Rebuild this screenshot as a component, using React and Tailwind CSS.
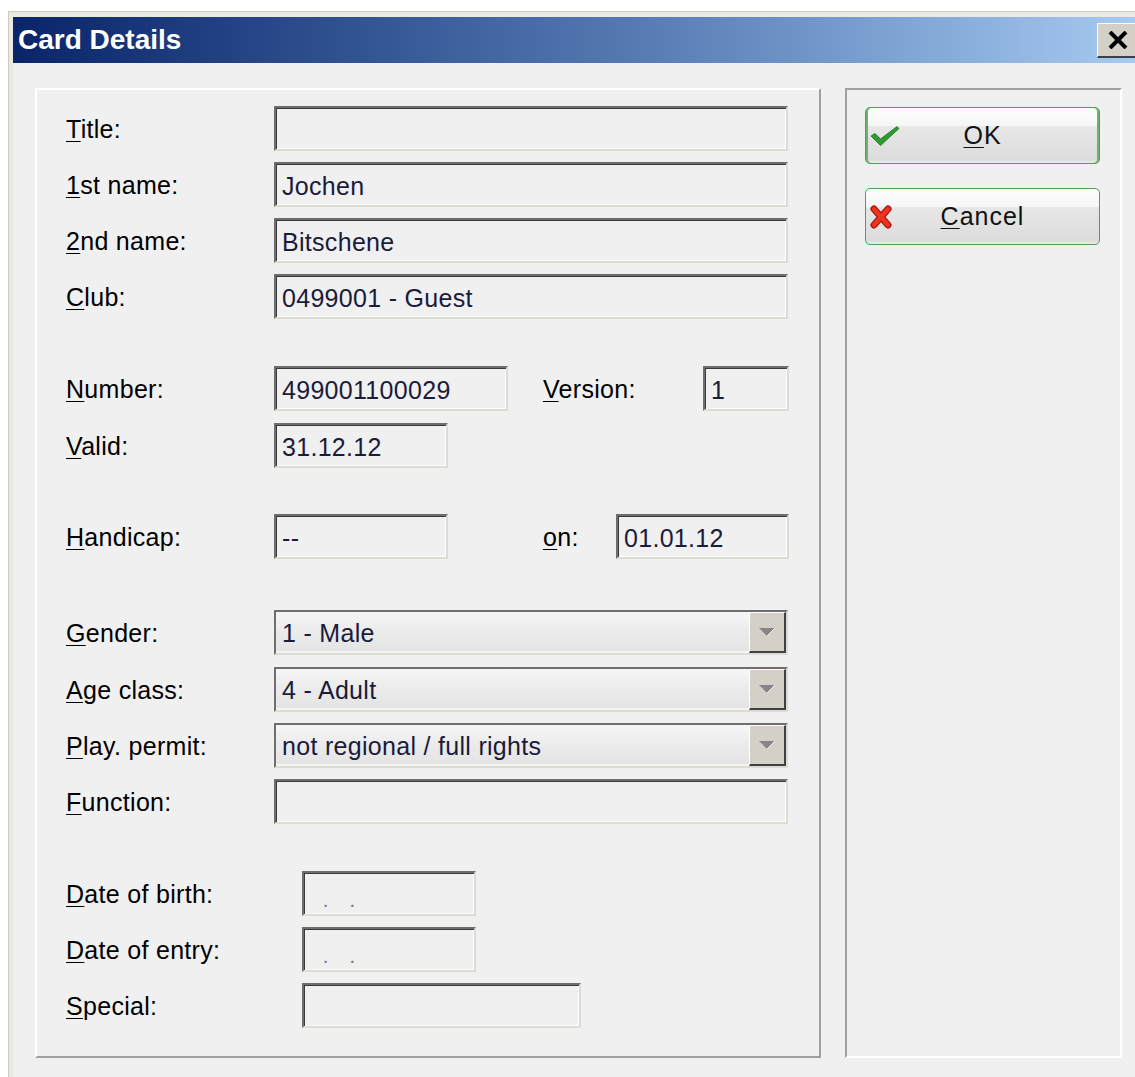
import React from "react";

const FONT = "font-['Liberation_Sans',Arial,sans-serif]";

// Label with an underlined access key as its first character
function Mn({ k, rest }) {
  return (
    <span className="text-[25px] tracking-[0.3px] text-black leading-none">
      <span className="underline decoration-1 underline-offset-[3px]">{k}</span>
      {rest}
    </span>
  );
}

// Sunken edit box
function Field({ w, children }) {
  return (
    <div
      className={`${w} h-[45px] shrink-0 border-2 border-t-[#6e6e6e] border-l-[#6e6e6e] border-b-[#dedbd4] border-r-[#dedbd4] shadow-[inset_1px_1px_0_#3a3a3a,inset_-1px_-1px_0_#ffffff] bg-[#f0f0f0] flex items-center pl-[6px] pt-[4px] text-[25px] tracking-[0.3px] text-[#1b1b3a] whitespace-pre overflow-hidden leading-none`}
    >
      {children}
    </div>
  );
}

// Drop-down list box
function Combo({ value }) {
  return (
    <div className="w-[514px] h-[45px] shrink-0 border-2 border-t-[#6e6e6e] border-l-[#6e6e6e] border-b-[#dedbd4] border-r-[#dedbd4] shadow-[inset_1px_1px_0_#3a3a3a] flex items-stretch">
      <div className="flex-1 flex items-center pl-[6px] pt-[4px] bg-[linear-gradient(to_bottom,#f6f6f6_0%,#ececec_45%,#e4e4e4_100%)] text-[25px] tracking-[0.3px] text-[#1b1b3a] whitespace-pre leading-none border-b-2 border-b-[#f4f4f4]">
        {value}
      </div>
      <div className="w-[37px] bg-[#d4d0c8] border-t border-l border-t-white border-l-white border-b-2 border-r-2 border-b-[#404040] border-r-[#404040] flex items-center justify-center">
        <svg width="18" height="10" viewBox="0 0 18 10">
          <path d="M1 1 H17 L9 9 Z" fill="#868686" />
          <path d="M17 1 L9 9" stroke="#ffffff" strokeWidth="1" opacity="0.8" />
        </svg>
      </div>
    </div>
  );
}

function Row({ mt, labelW, k, rest, children }) {
  return (
    <div className={`flex items-center h-[45px] ${mt}`}>
      <div className={`${labelW} shrink-0 pt-[4px]`}>
        <Mn k={k} rest={rest} />
      </div>
      {children}
    </div>
  );
}

function CheckIcon() {
  return (
    <svg width="30" height="22" viewBox="0 0 30 22">
      <path
        d="M1 11 L5 8.5 L10.5 14 L27 1.5 L29 3.5 L10.5 20.5 Z"
        fill="#2f9a2f"
        stroke="#1c6e1c"
        strokeWidth="0.8"
        strokeLinejoin="round"
      />
    </svg>
  );
}

function CrossIcon() {
  return (
    <svg width="22" height="24" viewBox="0 0 22 24">
      <g strokeLinecap="round">
        <path d="M4 4 L18 20 M18 4 L4 20" stroke="#a81a10" strokeWidth="7" />
        <path d="M4 4 L18 20 M18 4 L4 20" stroke="#f0331e" strokeWidth="4.2" />
      </g>
    </svg>
  );
}

function DlgButton({ icon, k, rest, isDefault, mt }) {
  return (
    <div
      className={`${mt} w-[235px] h-[57px] rounded-[5px] border-[1.5px] border-[#4f9f4f] bg-[linear-gradient(to_bottom,#fdfdfd_0%,#f6f6f6_32%,#e7e7e7_34%,#dcdcdc_94%,#ececec_100%)] flex items-center ${
        isDefault
          ? "shadow-[inset_2px_0_0_#6cb56c,inset_-2px_0_0_#6cb56c]"
          : "shadow-none"
      }`}
    >
      <div className="w-[34px] pl-[4px] flex items-center">{icon}</div>
      <div className="flex-1 text-center text-[25px] tracking-[1px] text-[#111] leading-none">
        <span className="underline decoration-1 underline-offset-[3px]">{k}</span>
        {rest}
      </div>
      <div className="w-[34px]" />
    </div>
  );
}

// Empty date mask: day . month . year
function DateMask() {
  return (
    <span className="pt-[12px] text-[15px] font-bold text-[#7a7a90]">{"   .     ."}</span>
  );
}

export default function App() {
  return (
    <div className={`w-[1135px] h-[1077px] bg-white overflow-hidden pl-[8px] pt-[11px] ${FONT}`}>
      <div className="h-full border-t border-l border-[#cfcbc3] bg-[#ebe9e4] pl-[4px] pt-[5px] flex flex-col">
        {/* caption bar */}
        <div className="h-[46px] shrink-0 flex items-center justify-between bg-linear-to-r from-[#0a246a] via-[#5679b3] via-55% to-[#a6caf0]">
          <span className="pl-[5px] text-[28px] font-bold text-white leading-none">Card Details</span>
          <div className="w-[38px] h-[35px] bg-[#d4d0c8] border-t border-l border-t-white border-l-white border-b-2 border-b-[#404040] flex items-center justify-center pl-[2px]">
            <svg width="20" height="18" viewBox="0 0 20 18">
              <path d="M2 1 L18 17 M18 1 L2 17" stroke="#000" strokeWidth="4" />
            </svg>
          </div>
        </div>

        {/* client area */}
        <div className="flex-1 bg-[#f0f0f0] flex pl-[22px] pt-[25px] gap-[24px]">
          <div className="w-[786px] h-[970px] shrink-0 border-2 border-t-white border-l-white border-b-[#a0a0a0] border-r-[#a0a0a0] pl-[29px] pt-[16px] flex flex-col">
            <Row mt="mt-0" labelW="w-[208px]" k="T" rest="itle:">
              <Field w="w-[514px]" />
            </Row>
            <Row mt="mt-[11px]" labelW="w-[208px]" k="1" rest="st name:">
              <Field w="w-[514px]">Jochen</Field>
            </Row>
            <Row mt="mt-[11px]" labelW="w-[208px]" k="2" rest="nd name:">
              <Field w="w-[514px]">Bitschene</Field>
            </Row>
            <Row mt="mt-[11px]" labelW="w-[208px]" k="C" rest="lub:">
              <Field w="w-[514px]">0499001 - Guest</Field>
            </Row>

            <Row mt="mt-[47px]" labelW="w-[208px]" k="N" rest="umber:">
              <Field w="w-[234px]">499001100029</Field>
              <div className="w-[195px] pl-[35px] pt-[4px] shrink-0">
                <Mn k="V" rest="ersion:" />
              </div>
              <Field w="w-[86px]">1</Field>
            </Row>
            <Row mt="mt-[12px]" labelW="w-[208px]" k="V" rest="alid:">
              <Field w="w-[174px]">31.12.12</Field>
            </Row>

            <Row mt="mt-[46px]" labelW="w-[208px]" k="H" rest="andicap:">
              <Field w="w-[174px]">--</Field>
              <div className="w-[168px] pl-[95px] pt-[4px] shrink-0">
                <Mn k="o" rest="n:" />
              </div>
              <Field w="w-[173px]">01.01.12</Field>
            </Row>

            <Row mt="mt-[51px]" labelW="w-[208px]" k="G" rest="ender:">
              <Combo value="1 - Male" />
            </Row>
            <Row mt="mt-[12px]" labelW="w-[208px]" k="A" rest="ge class:">
              <Combo value="4 - Adult" />
            </Row>
            <Row mt="mt-[11px]" labelW="w-[208px]" k="P" rest="lay. permit:">
              <Combo value="not regional / full rights" />
            </Row>
            <Row mt="mt-[11px]" labelW="w-[208px]" k="F" rest="unction:">
              <Field w="w-[514px]" />
            </Row>

            <Row mt="mt-[47px]" labelW="w-[236px]" k="D" rest="ate of birth:">
              <Field w="w-[174px]">
                <DateMask />
              </Field>
            </Row>
            <Row mt="mt-[11px]" labelW="w-[236px]" k="D" rest="ate of entry:">
              <Field w="w-[174px]">
                <DateMask />
              </Field>
            </Row>
            <Row mt="mt-[11px]" labelW="w-[236px]" k="S" rest="pecial:">
              <Field w="w-[279px]" />
            </Row>
          </div>

          <div className="w-[277px] h-[970px] shrink-0 border-2 border-t-[#a0a0a0] border-l-[#a0a0a0] border-b-white border-r-white pt-[17px] pl-[18px] flex flex-col">
            <DlgButton mt="mt-0" icon={<CheckIcon />} k="O" rest="K" isDefault />
            <DlgButton mt="mt-[24px]" icon={<CrossIcon />} k="C" rest="ancel" />
          </div>
        </div>
      </div>
    </div>
  );
}
